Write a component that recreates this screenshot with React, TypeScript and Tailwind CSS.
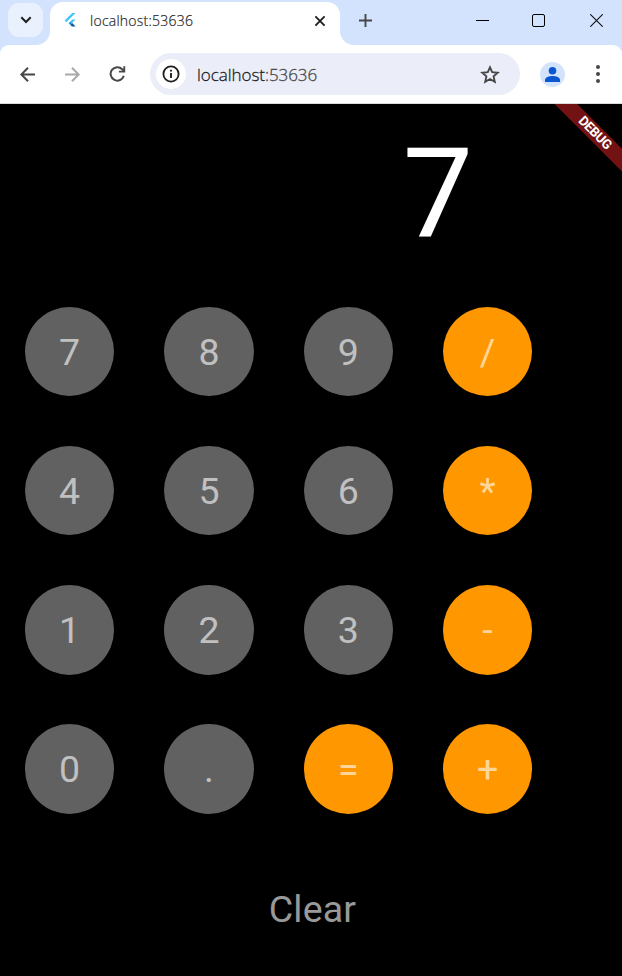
import React from 'react';

const rows: string[][] = [
  ['7', '8', '9', '/'],
  ['4', '5', '6', '*'],
  ['1', '2', '3', '-'],
  ['0', '.', '=', '+'],
];

const operators = ['/', '*', '-', '=', '+'];

function FlutterLogo() {
  return (
    <svg width="12" height="15" viewBox="0 0 12 15" className="shrink-0">
      <path d="M8.2 0H11.6L2.3 9.2L.6 7.4Z" fill="#47c5fb" />
      <path d="M8 6.6H11.6L8.1 10.1L6.3 8.4Z" fill="#47c5fb" />
      <path d="M4.6 10.2L6.4 8.4L8.2 10.1L6.4 11.9Z" fill="#1598e8" />
      <path d="M6.4 11.9L8.2 10.1L11.6 13.6H8Z" fill="#08589c" />
    </svg>
  );
}

function TabStrip() {
  return (
    <div className="flex h-[45px] bg-[#d3e3fd]">
      <div className="w-[50px]">
        <div className="ml-2 mt-[3px] flex h-[34px] w-[35px] items-center justify-center rounded-[11px] bg-[#eaf1fe]">
          <svg width="12" height="8" viewBox="0 0 12 8" fill="none" stroke="#1f1f1f" strokeWidth="2">
            <path d="M1.3 1.3L6 6L10.7 1.3" />
          </svg>
        </div>
      </div>
      <div className="relative mt-[2px] flex h-[43px] w-[290px] items-center rounded-t-[13px] bg-white pb-[6px] pl-[14px] pr-[14px]">
        <svg className="absolute -left-[14px] bottom-0" width="14" height="14" viewBox="0 0 14 14">
          <path d="M14 0V14H0A14 14 0 0 0 14 0Z" fill="#fff" />
        </svg>
        <svg className="absolute -right-[14px] bottom-0" width="14" height="14" viewBox="0 0 14 14">
          <path d="M0 0V14H14A14 14 0 0 1 0 0Z" fill="#fff" />
        </svg>
        <FlutterLogo />
        <span className="ml-[14px] text-[14px] font-light tracking-[0.25px] text-[#1f1f1f] [-webkit-text-stroke:0.2px]">localhost:53636</span>
        <svg className="ml-auto" width="12" height="12" viewBox="0 0 12 12" stroke="#1f1f1f" strokeWidth="1.9">
          <path d="M1.4 1.4L10.6 10.6M10.6 1.4L1.4 10.6" />
        </svg>
      </div>
      <svg className="ml-[19px] mt-[14px]" width="13" height="13" viewBox="0 0 13 13" stroke="#474747" strokeWidth="1.9">
        <path d="M6.5 0V13M0 6.5H13" />
      </svg>
      <div className="ml-auto mr-[19px] mt-[14px] flex h-[13px] items-center">
        <span className="mr-[43px] h-px w-[13px] bg-black" />
        <span className="mr-[45px] h-[13px] w-[13px] rounded-[2px] border border-black" />
        <svg width="13" height="13" viewBox="0 0 13 13" stroke="#111" strokeWidth="1.1">
          <path d="M.3 .3L12.7 12.7M12.7 .3L.3 12.7" />
        </svg>
      </div>
    </div>
  );
}

function Toolbar() {
  return (
    <div className="bg-[#d3e3fd]">
      <div className="flex h-[59px] items-center rounded-t-[9px] border-b border-[#dcdcdc] bg-white pl-[20px]">
        <svg width="15" height="15" viewBox="0 0 15 15" fill="none" stroke="#474747" strokeWidth="2">
          <path d="M15 7.5H1.6M8 .8L1.3 7.5L8 14.2" />
        </svg>
        <svg className="ml-[30px]" width="15" height="15" viewBox="0 0 15 15" fill="none" stroke="#a9a9a9" strokeWidth="2">
          <path d="M0 7.5H13.4M7 .8L13.7 7.5L7 14.2" />
        </svg>
        <svg className="ml-[29px]" width="17" height="16" viewBox="0 0 17 16" fill="none">
          <path d="M14.8 9.7A6.7 6.7 0 1 1 13.2 3.3L15 5" stroke="#474747" strokeWidth="2" />
          <path d="M16.2 .3V6.6H9.9V4.8H14.3V.3Z" fill="#474747" />
        </svg>
        <div className="ml-6 flex h-[42px] w-[370px] items-center rounded-full bg-[#ebeef8] pl-[6px] pr-5">
          <span className="flex h-[30px] w-[30px] items-center justify-center rounded-full bg-white">
            <svg width="18" height="18" viewBox="0 0 18 18" fill="none" stroke="#1f1f1f">
              <circle cx="9" cy="9" r="7.6" strokeWidth="1.8" />
              <path d="M9 8V13M9 4.8V6.6" strokeWidth="1.9" />
            </svg>
          </span>
          <span className="ml-[11px] mt-px text-[17px] font-light tracking-[-0.05px] text-[#1f1f1f] [-webkit-text-stroke:0.3px]">
            localhost<span className="text-[#474747]">:53636</span>
          </span>
          <svg className="ml-auto" width="20" height="19" viewBox="0 0 20 19" fill="none" stroke="#474747" strokeWidth="1.9">
            <path d="M10 2.4L12.2 7.2L17.7 7.7L13.6 11.4L14.8 16.8L10 14L5.2 16.8L6.4 11.4L2.3 7.7L7.8 7.2Z" />
          </svg>
        </div>
        <svg className="ml-5" width="25" height="25" viewBox="0 0 25 25">
          <circle cx="12.5" cy="12.5" r="12.5" fill="#d3e3fd" />
          <circle cx="12.5" cy="8.8" r="3.8" fill="#0b57d0" />
          <path d="M5 20V17.7C5 15.5 9 14 12.5 14S20 15.5 20 17.7V20Z" fill="#0b57d0" />
        </svg>
        <div className="ml-[30.5px] flex w-1 flex-col gap-[3px]">
          <span className="h-1 w-1 rounded-full bg-[#474747]" />
          <span className="h-1 w-1 rounded-full bg-[#474747]" />
          <span className="h-1 w-1 rounded-full bg-[#474747]" />
        </div>
      </div>
    </div>
  );
}

function CalcKey({ label }: { label: string }) {
  const tone = operators.includes(label) ? 'bg-[#ff9800] text-[#ffd699]' : 'bg-[#616161] text-[#c0c0c0]';
  return (
    <button className={`flex h-[89.3px] w-[89.3px] items-center justify-center rounded-full ${tone}`}>
      <span className="text-[37.5px] leading-[44px]">{label}</span>
    </button>
  );
}

export default function App() {
  return (
    <div className="h-[976px] w-[622px] overflow-hidden bg-black font-['Open_Sans','Noto_Sans',sans-serif]">
      <TabStrip />
      <Toolbar />
      <main className="relative flex h-[872px] flex-col overflow-hidden bg-black font-[Roboto,sans-serif]">
        <div className="absolute left-[515px] top-[20.5px] flex h-[15.5px] w-[160px] rotate-45 items-center justify-center bg-[#731212]">
          <span className="text-[13.25px] font-bold leading-none tracking-[-0.4px] text-white">DEBUG</span>
        </div>
        <div className="flex h-[178px] justify-end pr-[149px] pt-[17px] text-[125px] leading-[146px] text-white">7</div>
        <div className="grid grid-cols-[repeat(4,89.3px)] gap-x-[50px] gap-y-[49.85px] pl-[25px] pt-[25px]">
          {rows.flat().map((key) => (
            <CalcKey key={key} label={key} />
          ))}
        </div>
        <button className="mt-[73.4px] self-center pl-[3px] text-[37.5px] leading-[44px] tracking-[0.2px] text-[#999]">Clear</button>
      </main>
    </div>
  );
}
